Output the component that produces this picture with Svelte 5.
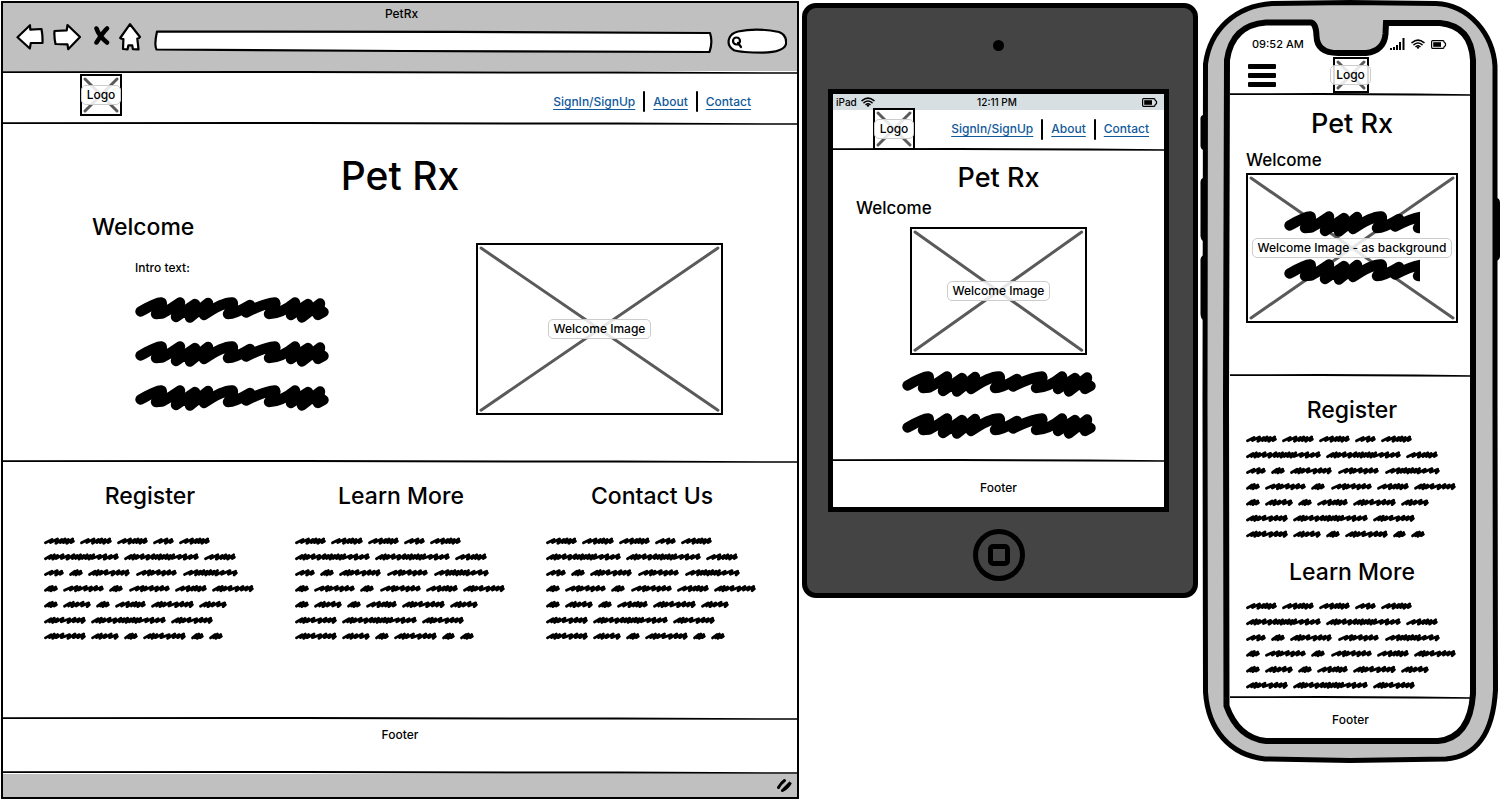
<script>
  const navLinks = ['SignIn/SignUp', 'About', 'Contact'];
  const columns = ['Register', 'Learn More', 'Contact Us'];

  // Scribbled word shapes: each number is the advance of one pen stroke.
  const strokes = {
    xs: [4, 3, 4],
    s: [6, 6, 5],
    m: [4, 3, 4, 5, 5],
    l: [5, 5, 4, 3, 3, 4],
    xl: [4, 3, 3, 5, 6, 5, 4, 4],
    xm: [6, 5, 3, 6, 5, 5, 5],
    w: [5, 5, 3, 3, 3, 3, 3, 3, 5, 6, 5],
    xxl: [4, 3, 3, 5, 5, 5, 3, 3, 3, 3, 3, 3, 6, 5, 5, 5]
  };

  // Every row lists the words with their start and end.
  const rows = [
    [['l', 0, 31], ['l', 36, 68], ['l', 73, 104], ['s', 109, 130], ['l', 135, 166]],
    [['xxl', 0, 75], ['xxl', 80, 155], ['l', 160, 192]],
    [['s', 0, 20], ['xs', 25, 39], ['xl', 44, 86], ['xm', 92, 133], ['w', 139, 194]],
    [['xs', 0, 14], ['xm', 19, 60], ['xs', 65, 79], ['xm', 85, 126], ['l', 131, 163], ['xl', 168, 210]],
    [['xs', 0, 14], ['m', 19, 47], ['xs', 52, 66], ['l', 71, 102], ['xl', 107, 150], ['m', 155, 183]],
    [['xl', 0, 42], ['xxl', 47, 122], ['xl', 127, 169]],
    [['xl', 0, 42], ['m', 47, 75], ['xs', 80, 94], ['xl', 99, 142], ['xs', 147, 160], ['xs', 165, 179]]
  ];

  function wordPath(kind, start, end, line) {
    const steps = strokes[kind];
    const total = steps.reduce((a, b) => a + b, 0);
    const unit = (end - start - 5) / total;
    const mid = 6 + line * 15.85;
    let x = start + 1.5;
    let d = `M${x.toFixed(1)} ${(mid + 1.8).toFixed(1)}`;
    steps.forEach((step, i) => {
      x += step * unit;
      const lift = i % 2 ? 2.1 : 1.5;
      const drop = i % 3 === 1 ? 2.3 : 1.6;
      d += `L${(x + 1.2).toFixed(1)} ${(mid - lift).toFixed(1)}L${(x - 0.4).toFixed(1)} ${(mid + drop).toFixed(1)}`;
    });
    return d + `L${(end - 1.6).toFixed(1)} ${(mid + 0.3).toFixed(1)}`;
  }
</script>

{#snippet rule()}
  <svg class="rule" viewBox="0 0 800 3" preserveAspectRatio="none" aria-hidden="true">
    <path d="M0 .3L300 0L620 .6L800 1.3V2.7L600 2.6L300 2L0 1.9Z" />
  </svg>
{/snippet}

{#snippet scribble(width = 194)}
  <svg class="scribble" {width} height="26" viewBox="0 0 {width} 26" aria-hidden="true">
    <path d="M5.500 14.500Q22 5 26 5.500Q29 6 21 17L27 16.500Q36 12 45 5.500L41 20L60 7L55 20.500L73 6L69 18Q88 5 97 5.500Q100 6 93 17Q100 17 115 8L111 15.500Q130 6 140 5.500Q142 7 134 17Q146 17 160 5.500L156 18L173 7L167 20.500L185 6.500L183 18L188.500 15M44 16L72 14M156 14L187 14" />
  </svg>
{/snippet}

{#snippet paragraph(count = 7)}
  <svg class="paragraph" viewBox="0 0 212 {count === 7 ? 106 : 95}" aria-hidden="true">
    {#each rows.slice(0, count) as words, line}
      {#each words as [kind, start, end]}
        <path d={wordPath(kind, start, end, line)} />
      {/each}
    {/each}
  </svg>
{/snippet}

{#snippet picture(label)}
  <div class="picture">
    <svg class="cross" preserveAspectRatio="none" viewBox="0 0 100 100" aria-hidden="true">
      <path d="M0 0L100 100M100 0L0 100" />
    </svg>
    <span class="label">{label}</span>
  </div>
{/snippet}

{#snippet nav()}
  <nav>
    {#each navLinks as link, i}
      {#if i}<span class="separator"></span>{/if}
      <a href="#{link.toLowerCase()}">{link}</a>
    {/each}
  </nav>
{/snippet}

{#snippet wifi()}
  <svg class="wifi" width="14" height="10" viewBox="0 0 14 10" aria-hidden="true">
    <path d="M1 3.600Q7-1.400 13 3.600M3 5.700Q7 2.400 11 5.700M5 7.500Q7 6 9 7.500" />
    <circle cx="7" cy="8.600" r="1.200" />
  </svg>
{/snippet}

{#snippet battery()}
  <svg class="battery" width="16" height="9" viewBox="0 0 16 9" aria-hidden="true">
    <path class="shell" d="M1.500 .7H12Q13 .7 13 2L14.500 3.500V5.500L13 7Q13 8.300 12 8.300H1.500Q.6 8.300 .6 7V2Q.6 .7 1.500 .7Z" />
    <path d="M2.200 2.200H10V6.800H2.200Z" />
  </svg>
{/snippet}

<main>
  <section class="browser">
    <div class="chrome">
      <p class="tab-title">PetRx</p>
      <div class="toolbar">
        <button aria-label="Back">
          <svg width="28" height="30" viewBox="0 0 28 30"><path d="M1.500 15.300L14 3.200L14.300 7.700L25.500 7Q26.800 14 26.500 21L14.800 21L13.800 26.500Z" /></svg>
        </button>
        <button aria-label="Forward">
          <svg width="28" height="30" viewBox="0 0 28 30"><path d="M1.500 9L13.700 8.300L14.500 3L27 15L15.200 27.200L14.500 22.300L2.500 22Q1 15 1.500 9Z" /></svg>
        </button>
        <button aria-label="Stop">
          <svg class="stop" width="20" height="30" viewBox="0 0 20 30"><path d="M6.500 6.500Q9 14 17 20.500M17 6.500Q14 9 6.500 20.500" /></svg>
        </button>
        <button aria-label="Home">
          <svg width="22" height="30" viewBox="0 0 22 30"><path d="M11 2.200L21 15Q20 16.600 18.300 16.500L19.500 27.300L13.900 27.100L13.200 23.300L9.400 23.300L8.600 27.300L4 27L4.400 17Q2 17 1.200 16Z" /></svg>
        </button>
        <div class="field address">
          <svg viewBox="0 0 560 24" preserveAspectRatio="none" aria-hidden="true"><path d="M3 1.500L300 1.800L557 3Q560 12 556.500 22L250 21L2.500 19.500Q0 15 3 1.500Z" /></svg>
          <input type="text" aria-label="Address" />
        </div>
        <div class="field search">
          <svg viewBox="0 0 60 26" aria-hidden="true">
            <path d="M11 3.500Q30-.5 52 4Q60 7 59 16Q57 24 36 24.700Q14 24.500 7 22.300Q0 18 2 11Q4 5 11 3.500Z" />
            <path class="lens" d="M13 13A3.500 3.500 0 1 0 6 13A3.500 3.500 0 1 0 13 13M11 15L14 19" />
          </svg>
          <input type="search" aria-label="Search" />
        </div>
      </div>
    </div>
    {@render rule()}
    <header>
      <div class="logo">{@render picture('Logo')}</div>
      {@render nav()}
    </header>
    {@render rule()}
    <div class="hero">
      <h1>Pet Rx</h1>
      <h2>Welcome</h2>
      <div class="hero-body">
        <div class="intro">
          <p>Intro text:</p>
          {@render scribble()}
          {@render scribble()}
          {@render scribble()}
        </div>
        <div class="hero-image">{@render picture('Welcome Image')}</div>
      </div>
    </div>
    {@render rule()}
    <div class="columns">
      {#each columns as title}
        <article>
          <h2>{title}</h2>
          {@render paragraph()}
        </article>
      {/each}
    </div>
    {@render rule()}
    <footer>Footer</footer>
    {@render rule()}
    <div class="status">
      <svg width="16" height="15" viewBox="0 0 16 15" aria-hidden="true"><path d="M1.500 9.500Q4 5 7.500 2.500M5.500 12.500Q11 9.500 13.500 4.500L7 11" /></svg>
    </div>
  </section>

  <section class="tablet">
    <span class="camera"></span>
    <div class="screen">
      <div class="device-bar">
        <span class="carrier">iPad {@render wifi()}</span>
        <span>12:11 PM</span>
        <span class="end">{@render battery()}</span>
      </div>
      <header>
        <div class="logo">{@render picture('Logo')}</div>
        {@render nav()}
      </header>
      {@render rule()}
      <div class="tablet-body">
        <h1>Pet Rx</h1>
        <h2>Welcome</h2>
        <div class="tablet-image">{@render picture('Welcome Image')}</div>
        {@render scribble()}
        {@render scribble()}
      </div>
      {@render rule()}
      <footer>Footer</footer>
    </div>
    <button class="home" aria-label="Home button"><span></span></button>
  </section>

  <section class="phone">
    <svg class="shell-art" viewBox="0 0 300 764" preserveAspectRatio="none" aria-hidden="true">
      <path class="key" d="M4 115Q0 115 .5 120V146Q1 150 4 150ZM4 178Q0 178 .5 184V236Q1 241 4 241ZM4 255Q0 256 .5 262V314Q1 320 4 320ZM296 198Q300 198 300 203V256Q300 260 296 261Z" />
      <path class="body" d="M72 3.500L150 2.500L236 3.500C270 5 293 35 295 66L295 400L295.500 690C293 735 275 757 246 759L150 760.500L65 759C30 755 8 730 5.500 692L5 400L5.500 64C10 30 35 6 72 3.500Z" />
      <path class="glass" d="M66 22.500H110Q116 22 116.500 36Q117 53 138 53H166Q184 51 185.500 34L186 23H240Q271 26 273 60L273 400V694Q270 738 238 741L66 741Q38 738 26.500 706L26 400L27 60Q32 25 66 22.500Z" />
    </svg>
    <div class="phone-screen">
      <div class="phone-bar">
        <span>09:52 AM</span>
        <span class="indicators">
          <svg width="15" height="12" viewBox="0 0 15 12" aria-hidden="true"><path d="M0 10H2V12H0ZM3 9H5V12H3ZM6 7H8V12H6ZM9 4H11V12H9ZM12.500 0H14.500V12H12.500Z" /></svg>
          {@render wifi()}
          {@render battery()}
        </span>
      </div>
      <header>
        <button class="menu" aria-label="Menu"><span></span><span></span><span></span></button>
        <div class="logo">{@render picture('Logo')}</div>
      </header>
      {@render rule()}
      <div class="phone-hero">
        <h1>Pet Rx</h1>
        <h2>Welcome</h2>
        <div class="phone-image">
          {@render picture('Welcome Image - as background')}
          <div class="overlay">
            {@render scribble(136)}
            {@render scribble(136)}
          </div>
        </div>
      </div>
      {@render rule()}
      <div class="phone-text">
        <h2>Register</h2>
        {@render paragraph()}
        <h2>Learn More</h2>
        {@render paragraph(6)}
      </div>
      {@render rule()}
      <footer>Footer</footer>
    </div>
  </section>
</main>

<style>
  :global(body) {
    margin: 0;
    background: #fff;
  }

  main {
    display: grid;
    grid-template-columns: minmax(0, 800fr) minmax(0, 400fr) minmax(0, 300fr);
    align-items: start;
    font: 500 12px/16px Inter, "Open Sans", sans-serif;
    color: #000;
  }

  h1, h2, p {
    margin: 0;
  }

  h1 {
    font-size: 27px;
    line-height: 36px;
    font-weight: 500;
    text-align: center;
  }

  h2 {
    font-size: 23px;
    line-height: 32px;
    font-weight: 500;
    text-align: center;
  }

  svg {
    display: block;
    flex: none;
  }

  button {
    padding: 0;
    border: 0;
    background: none;
  }

  footer {
    text-align: center;
  }

  .rule {
    width: 100%;
    height: 3px;
  }

  .scribble path {
    fill: none;
    stroke: #000;
    stroke-width: 10.4;
    stroke-linecap: round;
    stroke-linejoin: round;
  }

  .paragraph {
    width: 100%;
  }

  .paragraph path {
    fill: none;
    stroke: #000;
    stroke-width: 2.8;
    stroke-linecap: round;
    stroke-linejoin: round;
  }

  .picture {
    display: grid;
    grid-template: minmax(0, 1fr) / minmax(0, 1fr);
    place-items: center;
    box-sizing: border-box;
    width: 100%;
    height: 100%;
    min-height: 0;
    border: 2px solid #000;
    background: #fff;
  }

  .cross {
    grid-area: 1 / 1;
    box-sizing: border-box;
    width: 100%;
    height: 100%;
    padding: 3px;
    overflow: visible;
  }

  .cross path {
    stroke: #5a5a5a;
    stroke-width: 3;
    stroke-linecap: round;
    vector-effect: non-scaling-stroke;
  }

  .label {
    grid-area: 1 / 1;
    z-index: 1;
    padding: 1px 5px;
    border: 1px solid #ccc;
    border-radius: 5px;
    background: rgb(255 255 255 / 85%);
    white-space: nowrap;
  }

  .logo {
    width: 42px;
    height: 42px;
  }

  header {
    display: flex;
    align-items: flex-end;
    justify-content: space-between;
  }

  nav {
    display: flex;
    align-items: center;
    gap: 8px;
  }

  nav a {
    color: #11599b;
    text-underline-offset: 3px;
  }

  .separator {
    width: 2px;
    height: 21px;
    border-radius: 1px;
    background: #000;
  }

  /* Browser window */
  .browser {
    margin: 1px;
    border: 2px solid #000;
  }

  .chrome {
    padding: 3px 10px 17px 13px;
    background: #c0c0c0;
  }

  .tab-title {
    text-align: center;
  }

  .toolbar {
    display: flex;
    align-items: flex-start;
    gap: 9px;
  }

  .toolbar path {
    fill: #fff;
    stroke: #000;
    stroke-width: 2.2;
    stroke-linejoin: round;
    stroke-linecap: round;
  }

  .toolbar .stop path {
    fill: none;
    stroke-width: 4.5;
  }

  .field {
    position: relative;
    align-self: flex-end;
  }

  .field svg {
    width: 100%;
    height: 100%;
  }

  .field input {
    position: absolute;
    inset: 3px 6px;
    min-width: 0;
    padding: 0;
    border: 0;
    outline: 0;
    background: transparent;
    font: inherit;
  }

  .toolbar .lens {
    fill: none;
  }

  .address {
    flex: 1;
    height: 24px;
    margin: 8px 5px 0 4px;
  }

  .search {
    width: 60px;
    height: 26px;
  }

  .search input {
    left: 18px;
    width: 36px;
  }

  .browser header {
    padding: 0 46px 6px 77px;
  }

  .browser nav {
    margin-bottom: 4px;
  }

  .hero {
    padding: 27px 0 45px;
  }

  .hero h1 {
    font-size: 39px;
    line-height: 48px;
  }

  .hero h2 {
    padding: 11px 89px 0;
    text-align: left;
  }

  .hero-body {
    display: flex;
    justify-content: space-between;
    padding: 0 74px 0 132px;
  }

  .intro {
    display: flex;
    flex-direction: column;
    gap: 18px;
    padding-top: 17px;
  }

  .intro p {
    padding-bottom: 3px;
  }

  .hero-image {
    width: 42%;
    aspect-ratio: 248 / 173;
  }

  .columns {
    display: grid;
    grid-template-columns: repeat(3, minmax(0, 1fr));
    gap: 39px;
    padding: 17px 39px 76px 41px;
  }

  .columns .paragraph {
    padding-top: 23px;
  }

  .browser footer {
    padding: 7px 0 28px;
  }

  .status {
    display: flex;
    justify-content: flex-end;
    padding: 4px;
    background: #c0c0c0;
  }

  .status path {
    fill: none;
    stroke: #000;
    stroke-width: 3;
    stroke-linecap: round;
  }

  /* Tablet */
  .tablet {
    display: flex;
    flex-direction: column;
    align-items: center;
    margin: 3px 2px 0;
    padding: 32px 24px 12px 21px;
    border: 5px solid #000;
    border-radius: 14px;
    background: #444;
  }

  .camera {
    width: 11px;
    height: 11px;
    border-radius: 50%;
    background: #000;
  }

  .screen {
    box-sizing: border-box;
    width: 100%;
    margin: 38px 0 17px;
    border: 5px solid #000;
    background: #fff;
  }

  .device-bar {
    display: grid;
    grid-template-columns: 1fr auto 1fr;
    padding: 0 6px 0 3px;
    background: #d7dfe2;
    font-size: 10px;
  }

  .carrier {
    display: flex;
    align-items: center;
    gap: 4px;
  }

  .end {
    display: flex;
    align-items: center;
    justify-content: flex-end;
  }

  .wifi path {
    fill: none;
    stroke: #000;
    stroke-width: 1.5;
    stroke-linecap: round;
  }

  .battery .shell {
    fill: none;
    stroke: #000;
    stroke-width: 1.2;
  }

  .tablet header {
    align-items: center;
    height: 38px;
    padding: 0 15px 0 40px;
  }

  .tablet-body {
    display: flex;
    flex-direction: column;
    align-items: center;
    gap: 16px;
    padding: 9px 23px 20px;
  }

  .tablet-body h2 {
    align-self: flex-start;
    margin: -16px 0 -9px;
    font-size: 17px;
    line-height: 24px;
  }

  .tablet-image {
    display: grid;
    grid-template: minmax(0, 1fr) / minmax(0, 1fr);
    width: 62%;
    min-height: 0;
    aspect-ratio: 175 / 127;
  }

  .tablet footer {
    padding: 18px 0 11px;
  }

  .home {
    display: grid;
    place-items: center;
    box-sizing: border-box;
    width: 52px;
    height: 52px;
    border: 5px solid #000;
    border-radius: 50%;
  }

  .home span {
    width: 12px;
    height: 12px;
    border: 5px solid #000;
    border-radius: 5px;
  }

  /* Phone */
  .phone {
    position: relative;
  }

  .shell-art {
    position: absolute;
    inset: 0;
    width: 100%;
    height: 100%;
  }

  .body {
    fill: #c0c0c0;
    stroke: #000;
    stroke-width: 5;
  }

  .glass {
    fill: #fff;
    stroke: #000;
    stroke-width: 6;
  }

  .phone-screen {
    position: relative;
    padding: 36px 29px 36px 30px;
  }

  .phone-bar {
    display: flex;
    align-items: center;
    justify-content: space-between;
    padding: 0 24px 0 22px;
    font-size: 11px;
  }

  .indicators {
    display: flex;
    align-items: center;
    gap: 6px;
  }

  .phone header {
    display: grid;
    grid-template-columns: 1fr auto 1fr;
    align-items: center;
    padding: 5px 18px 0;
  }

  .phone .logo {
    width: 36px;
    height: 36px;
  }

  .menu {
    display: grid;
    gap: 4px;
    width: 28px;
  }

  .menu span {
    height: 5px;
    border-radius: 1px;
    background: #000;
  }

  .phone-hero {
    padding: 10px 13px 51px 16px;
  }

  .phone-hero h2 {
    padding: 6px 0 1px;
    font-size: 17px;
    line-height: 24px;
    text-align: left;
  }

  .phone-image {
    display: grid;
    grid-template: minmax(0, 1fr) / minmax(0, 1fr);
    aspect-ratio: 212 / 150;
  }

  .phone-image > :global(*) {
    grid-area: 1 / 1;
  }

  .overlay {
    display: grid;
    place-content: center;
    gap: 22px;
  }

  .phone-text {
    padding: 17px 13px 0 16px;
  }

  .phone-text .paragraph {
    padding: 7px 0 17px;
  }

  .phone-text .paragraph:last-child {
    padding: 12px 0 1px;
  }

  .phone footer {
    padding-top: 13px;
  }
</style>
